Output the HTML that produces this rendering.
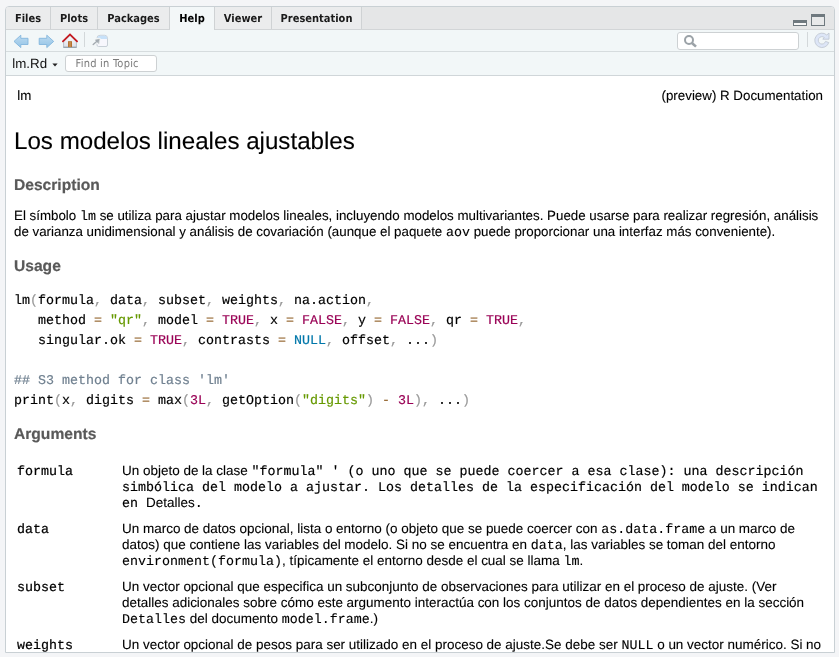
<!DOCTYPE html>
<html lang="es">
<head>
<meta charset="utf-8">
<title>lm.Rd</title>
<style>
html,body{margin:0;padding:0;}
body{width:839px;height:657px;overflow:hidden;background:#f4f5f7;position:relative;
  font-family:"Liberation Sans",sans-serif;font-size:13.33px;color:#000;text-rendering:geometricPrecision;}
#pane{position:absolute;left:5px;top:6px;width:828px;height:645px;border:1px solid #c9d0d4;
  border-radius:4px 4px 0 0;background:#fff;overflow:hidden;will-change:transform;}
/* tab bar */
#tabs{position:absolute;left:0;top:0;width:828px;height:22px;background:#e5e6e7;border-bottom:1px solid #d2d5d7;}
.tab{position:absolute;top:0;height:22px;box-sizing:border-box;border-right:1px solid #cfd2d4;
  font-family:"DejaVu Sans Condensed","DejaVu Sans",sans-serif;font-weight:bold;font-size:11px;line-height:24px;
  text-align:center;color:#1a1a1a;background:#ebeced;}
.tab.sel{background:#f3f7f8;height:24px;color:#000;}
/* toolbars */
#tb1{position:absolute;left:0;top:23px;width:828px;height:21px;background:#f2f7f8;border-bottom:1px solid #d6dcde;}
#tb2{position:absolute;left:0;top:45px;width:828px;height:23px;background:#f2f7f8;border-bottom:1px solid #d0d6d9;}
.sep{position:absolute;width:1px;background:#d3d8da;}
.inp{position:absolute;box-sizing:border-box;background:#fff;border:1px solid #cdd1d3;border-radius:3px;}
#fname{position:absolute;left:6.3px;top:4px;font-size:13.33px;line-height:16px;color:#111;}
#findtxt{position:absolute;left:9.6px;top:0;font-family:"DejaVu Sans Condensed","DejaVu Sans",sans-serif;font-size:11px;letter-spacing:0.23px;line-height:15px;color:#7b7b7b;white-space:nowrap;}
/* content */
#doc{position:absolute;left:0;top:69px;width:828px;height:576px;background:#fff;overflow:hidden;}
.abs{position:absolute;white-space:nowrap;line-height:16px;}
h2,h3,p,pre{margin:0;}
p.arg{font-size:13.47px;}
h2{font-size:24.15px;font-weight:normal;line-height:28px;}
h3{font-size:15.6px;font-weight:bold;color:#595959;line-height:18px;}
code,pre,.m{font-family:"Liberation Mono",monospace;font-size:13.33px;}
code,.m{line-height:0;}
#doc{-webkit-text-stroke:0.1px;}
pre,.m{-webkit-text-stroke:0.18px;}
code{-webkit-text-stroke:0.12px;}
code.abs{-webkit-text-stroke:0.22px;}
h3{-webkit-text-stroke:0.2px;}
pre,pre.abs{line-height:20px;color:#000;white-space:pre;}
.pu{color:#999;} .op{color:#9a6e3a;} .st{color:#690;} .bo{color:#905;} .kw{color:#07a;} .co{color:#708090;}
</style>
</head>
<body>
<div id="pane">
  <div id="tabs">
    <div class="tab" style="left:0;width:45px;">Files</div>
    <div class="tab" style="left:45px;width:47px;">Plots</div>
    <div class="tab" style="left:92px;width:72px;">Packages</div>
    <div class="tab sel" style="left:164px;width:45px;">Help</div>
    <div class="tab" style="left:209px;width:57px;">Viewer</div>
    <div class="tab" style="left:266px;width:90px;">Presentation</div>
  </div>
  <div id="tb1">
    <div class="sep" style="left:78px;top:2px;height:15px;"></div>
    <div class="inp" style="left:671px;top:2px;width:122px;height:18px;"></div>
    <div class="sep" style="left:801px;top:2px;height:15px;"></div>
  </div>
  <div id="tb2">
    <div id="fname">lm.Rd</div>
    <div class="inp" style="left:59px;top:3px;width:92px;height:17px;"><span id="findtxt">Find in Topic</span></div>
  </div>
  <div id="doc">
    <div class="abs" style="left:11.2px;top:12px;">lm</div>
    <div class="abs" style="right:11px;top:12px;">(preview) R Documentation</div>
    <h2 class="abs" style="left:8px;top:52px;line-height:28px;">Los modelos lineales ajustables</h2>
    <h3 class="abs" style="left:8px;top:101px;line-height:18px;">Description</h3>
    <p class="abs" style="left:8px;top:132px;">El símbolo <code>lm</code> se utiliza para ajustar modelos lineales, incluyendo modelos multivariantes. Puede usarse para realizar regresión, análisis<br>de varianza unidimensional y análisis de covariación (aunque el paquete <code>aov</code> puede proporcionar una interfaz más conveniente).</p>
    <h3 class="abs" style="left:8px;top:182px;line-height:18px;">Usage</h3>
<pre class="abs" style="left:8px;top:216px;line-height:20px;">lm<span class="pu">(</span>formula<span class="pu">,</span> data<span class="pu">,</span> subset<span class="pu">,</span> weights<span class="pu">,</span> na.action<span class="pu">,</span>
   method <span class="op">=</span> <span class="st">"qr"</span><span class="pu">,</span> model <span class="op">=</span> <span class="bo">TRUE</span><span class="pu">,</span> x <span class="op">=</span> <span class="bo">FALSE</span><span class="pu">,</span> y <span class="op">=</span> <span class="bo">FALSE</span><span class="pu">,</span> qr <span class="op">=</span> <span class="bo">TRUE</span><span class="pu">,</span>
   singular.ok <span class="op">=</span> <span class="bo">TRUE</span><span class="pu">,</span> contrasts <span class="op">=</span> <span class="kw">NULL</span><span class="pu">,</span> offset<span class="pu">,</span> ...<span class="pu">)</span>

<span class="co">## S3 method for class 'lm'</span>
print<span class="pu">(</span>x<span class="pu">,</span> digits <span class="op">=</span> max<span class="pu">(</span><span class="bo">3L</span><span class="pu">,</span> getOption<span class="pu">(</span><span class="st">"digits"</span><span class="pu">)</span> <span class="op">-</span> <span class="bo">3L</span><span class="pu">)</span><span class="pu">,</span> ...<span class="pu">)</span></pre>
    <h3 class="abs" style="left:8px;top:350px;line-height:18px;">Arguments</h3>
    <code class="abs" style="left:11px;top:389px;line-height:16px;">formula</code>
    <p class="abs arg" style="left:116px;top:387px;">Un objeto de la clase <span class="m">"formula" ′ (o uno que se puede coercer a esa clase): una descripción<br>simbólica del modelo a ajustar. Los detalles de la especificación del modelo se indican<br>en </span>Detalles<span class="m">.</span></p>
    <code class="abs" style="left:11px;top:447px;line-height:16px;">data</code>
    <p class="abs arg" style="left:116px;top:445px;">Un marco de datos opcional, lista o entorno (o objeto que se puede coercer con <code>as.data.frame</code> a un marco de<br>datos) que contiene las variables del modelo. Si no se encuentra en <code>data</code>, las variables se toman del entorno<br><code>environment(formula)</code>, típicamente el entorno desde el cual se llama <code>lm</code>.</p>
    <code class="abs" style="left:11px;top:505px;line-height:16px;">subset</code>
    <p class="abs arg" style="left:116px;top:503px;">Un vector opcional que especifica un subconjunto de observaciones para utilizar en el proceso de ajuste. (Ver<br>detalles adicionales sobre cómo este argumento interactúa con los conjuntos de datos dependientes en la sección<br><code>Detalles</code> del documento <code>model.frame</code>.)</p>
    <code class="abs" style="left:11px;top:563px;line-height:16px;">weights</code>
    <p class="abs arg" style="left:116px;top:561px;">Un vector opcional de pesos para ser utilizado en el proceso de ajuste.Se debe ser <code>NULL</code> o un vector numérico. Si no</p>
  </div>
</div>
<svg id="icons" width="839" height="657" viewBox="0 0 839 657" style="position:absolute;left:0;top:0;pointer-events:none;">
  <defs>
    <linearGradient id="ga" x1="0" y1="0" x2="0" y2="1"><stop offset="0" stop-color="#bddbf1"/><stop offset="1" stop-color="#94c4e6"/></linearGradient>
    <linearGradient id="gh" x1="0" y1="0" x2="0" y2="1"><stop offset="0" stop-color="#fbfbfd"/><stop offset="1" stop-color="#dcdfe8"/></linearGradient>
  </defs>
  <!-- back / forward -->
  <polygon points="14,41.4 20.8,35.2 20.8,38.3 28,38.3 28,44.5 20.8,44.5 20.8,47.6" fill="url(#ga)" stroke="#82b6dc" stroke-width="0.9" stroke-linejoin="round"/>
  <polygon points="53.7,41.4 46.8,35.2 46.8,38.3 39.2,38.3 39.2,44.5 46.8,44.5 46.8,47.6" fill="url(#ga)" stroke="#82b6dc" stroke-width="0.9" stroke-linejoin="round"/>
  <!-- home -->
  <polygon points="63.6,41.6 70,35.6 76.4,41.6 76.4,47.2 63.6,47.2" fill="url(#gh)" stroke="#a9b3bb" stroke-width="0.8"/>
  <line x1="63.3" y1="47.3" x2="76.7" y2="47.3" stroke="#8794a0" stroke-width="0.9"/>
  <rect x="68" y="41.2" width="4" height="5.9" fill="#b3702f"/>
  <rect x="68.8" y="42" width="2.2" height="5" fill="#c4884a"/>
  <polyline points="62.9,41.3 70,34.4 77.1,41.3" fill="none" stroke="#c5161d" stroke-width="1.7" stroke-linecap="round" stroke-linejoin="miter"/>
  <!-- popup -->
  <path d="M97 38.3 a3 3 0 0 1 3 -3 h4.5 a3 3 0 0 1 3 3 v6.7 a1.5 1.5 0 0 1 -1.5 1.5 h-7.5 a1.5 1.5 0 0 1 -1.5 -1.5 z" fill="#f7f7fd" stroke="#c2cbd3" stroke-width="0.9"/>
  <path d="M97.4 39 v-0.7 a2.6 2.6 0 0 1 2.6 -2.6 h4.5 a2.6 2.6 0 0 1 2.6 2.6 v0.7 z" fill="#c7e1f9"/>
  <g stroke="#f4f7f8" stroke-width="2.6" stroke-linejoin="round" stroke-linecap="round" fill="#f4f7f8">
    <line x1="93.2" y1="44.6" x2="97.4" y2="40.8"/><polygon points="99.4,39 95.2,39.8 98.6,43.3"/>
  </g>
  <g stroke="#a3abb1" stroke-width="1.4" stroke-linecap="round" fill="#a3abb1">
    <line x1="93.2" y1="44.6" x2="97.2" y2="41"/><polygon points="99.3,39.1 95.2,39.9 98.5,43.4" stroke-width="0.4"/>
  </g>
  <!-- search magnifier -->
  <circle cx="689" cy="40" r="4" fill="none" stroke="#9ba2a7" stroke-width="2"/>
  <line x1="692.2" y1="43.2" x2="696" y2="46.6" stroke="#9ba2a7" stroke-width="2.6" stroke-linecap="butt"/>
  <!-- refresh -->
  <path d="M826.8 35 A7.2 7.2 0 1 0 828.8 42.6 L825.5 41.4 A3.7 3.7 0 1 1 824.3 37.5 L822.8 39.2 L829 39.2 L829 33 Z" fill="#dde6f7" stroke="#bcc4ce" stroke-width="0.8" stroke-linejoin="round"/>
  <!-- min / max -->
  <rect x="793.5" y="20.5" width="13" height="5" fill="#f8f8f8" stroke="#6f797f" stroke-width="1"/>
  <rect x="793" y="20" width="14" height="3" fill="#6f797f"/>
  <rect x="811.5" y="14.5" width="13" height="11" fill="#e8e9ea" stroke="#6f797f" stroke-width="1"/>
  <rect x="811" y="14" width="14" height="3" fill="#6f797f"/>
  <!-- dropdown arrow -->
  <polygon points="52.4,63.6 57.6,63.6 55,66.4" fill="#222"/>
</svg>
</body>
</html>
